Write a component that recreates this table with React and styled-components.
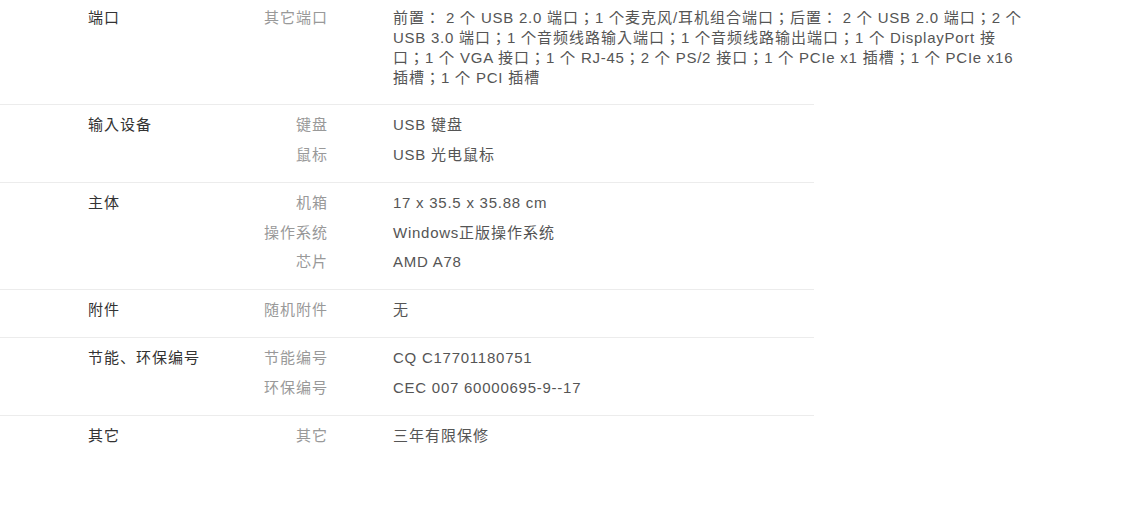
import React from "react";
import styled, { createGlobalStyle } from "styled-components";

const Global = createGlobalStyle`
  html, body { margin: 0; padding: 0; background: #fff; }
  body {
    font-family: "Liberation Sans", Arial, "Noto Sans CJK JP", "Noto Sans CJK SC", sans-serif;
    font-size: 15px;
    letter-spacing: 0.75px;
  }
`;

const Table = styled.div`
  width: 814px;
  margin-top: -2px;
`;

const Row = styled.div`
  display: grid;
  grid-template-columns: 88px 175px 64px 1fr;
  padding: 10px 0 17px;
  border-bottom: 1px solid ${(p) => (p.$last ? "transparent" : "#ececec")};
  &:first-child { padding-bottom: 16px; }
`;

const Category = styled.div`
  grid-column: 2;
  color: #333;
  line-height: 20px;
  white-space: nowrap;
`;

const Items = styled.div`
  grid-column: 3 / span 2;
  display: flex;
  flex-direction: column;
  gap: 9.75px;
`;

const Item = styled.div`
  display: grid;
  grid-template-columns: 64px 66px 632px;
  line-height: 20px;
`;

const Label = styled.div`
  color: #999;
  text-align: right;
  white-space: nowrap;
  direction: rtl;
  margin-right: -1px;
`;

const Value = styled.div`
  grid-column: 3;
  color: #555;
`;

const Cjk = styled.span`
  letter-spacing: 1px;
`;

const CJK_RE = /([\u3000-\u303f\u3400-\u9fff\uff00-\uffef]+)/;

function Mixed({ text }) {
  return text
    .split(CJK_RE)
    .filter(Boolean)
    .map((part, i) =>
      CJK_RE.test(part) ? <Cjk key={i}>{part}</Cjk> : <React.Fragment key={i}>{part}</React.Fragment>
    );
}

const data = [
  {
    cat: "端口",
    items: [
      [
        "其它端口",
        "前置： 2 个 USB 2.0 端口；1 个麦克风/耳机组合端口；后置： 2 个 USB 2.0 端口；2 个 USB 3.0 端口；1 个音频线路输入端口；1 个音频线路输出端口；1 个 DisplayPort 接口；1 个 VGA 接口；1 个 RJ-45；2 个 PS/2 接口；1 个 PCIe x1 插槽；1 个 PCIe x16 插槽；1 个 PCI 插槽",
      ],
    ],
  },
  {
    cat: "输入设备",
    items: [
      ["键盘", "USB 键盘"],
      ["鼠标", "USB 光电鼠标"],
    ],
  },
  {
    cat: "主体",
    items: [
      ["机箱", "17 x 35.5 x 35.88 cm"],
      ["操作系统", "Windows正版操作系统"],
      ["芯片", "AMD A78"],
    ],
  },
  { cat: "附件", items: [["随机附件", "无"]] },
  {
    cat: "节能、环保编号",
    items: [
      ["节能编号", "CQ C17701180751"],
      ["环保编号", "CEC 007 60000695-9--17"],
    ],
  },
  { cat: "其它", items: [["其它", "三年有限保修"]] },
];

export default function App() {
  return (
    <>
      <Global />
      <Table>
        {data.map((r, i) => (
          <Row key={i} $last={i === data.length - 1}>
            <Category>
              <Mixed text={r.cat} />
            </Category>
            <Items>
              {r.items.map(([l, v], j) => (
                <Item key={j}>
                  <Label>
                    <Mixed text={l} />
                  </Label>
                  <Value>
                    <Mixed text={v} />
                  </Value>
                </Item>
              ))}
            </Items>
          </Row>
        ))}
      </Table>
    </>
  );
}
